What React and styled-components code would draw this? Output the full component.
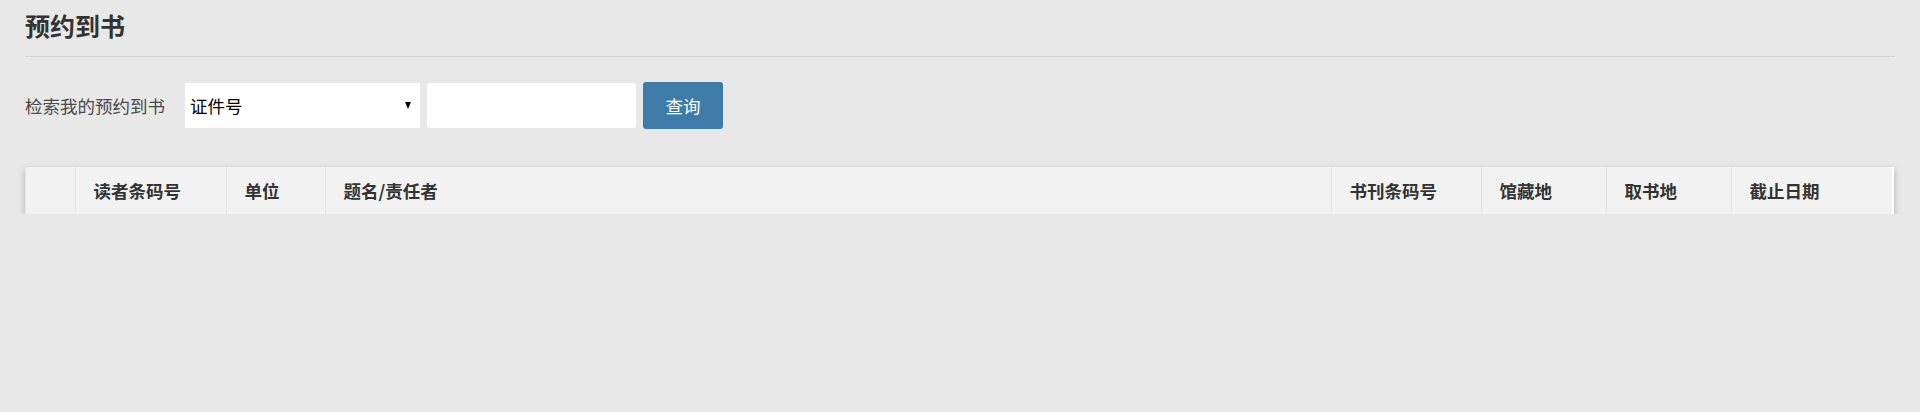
import React from "react";
import styled, { createGlobalStyle } from "styled-components";

const Global = createGlobalStyle`
  html, body { margin: 0; padding: 0; background: #e8e8e8; }
  body { font-family: "Noto Sans CJK SC", "Open Sans", sans-serif; color: #333; }
  * { box-sizing: border-box; }
`;

const Page = styled.div`
  padding: 0 25px;
  width: 1920px;
`;

const Title = styled.h2`
  margin: 0;
  padding: 7px 0 13px;
  line-height: 36px;
  font-size: 25px;
  font-weight: 700;
  color: #333;
  border-bottom: 1px solid #d3d3d3;
`;

const SearchRow = styled.div`
  display: flex;
  align-items: center;
  gap: 7px;
  margin-top: 25px;
  height: 47px;
`;

const Label = styled.span`
  width: 153px;
  font-size: 17.5px;
  color: #4a4a4a;
  line-height: 24px;
`;

const SelectWrap = styled.div`
  position: relative;
  width: 235px;
  height: 45px;
  background: #fff;
`;

const Select = styled.select`
  appearance: none;
  width: 100%;
  height: 100%;
  border: none;
  outline: none;
  background: transparent;
  padding: 0 24px 0 5px;
  font-family: inherit;
  font-size: 17.5px;
  color: #000;
`;

const Arrow = styled.span`
  position: absolute;
  right: 9px;
  top: 19px;
  width: 0;
  height: 0;
  border-left: 3.5px solid transparent;
  border-right: 3.5px solid transparent;
  border-top: 7px solid #000;
  pointer-events: none;
`;

const Input = styled.input`
  width: 209px;
  height: 45px;
  border: none;
  border-radius: 3px;
  background: #fff;
  outline: none;
  padding: 0 8px;
  font-family: inherit;
  font-size: 17.5px;
`;

const Button = styled.button`
  width: 80px;
  height: 47px;
  border: none;
  border-radius: 3px;
  background: #3e7ba8;
  color: #fff;
  font-family: inherit;
  font-size: 17.5px;
  cursor: pointer;
`;

const TableCard = styled.div`
  margin-top: 38px;
  width: 1869px;
  background: #f2f2f2;
  box-shadow: 0 3px 7px rgba(0, 0, 0, 0.26);
  border-left: 1px solid #e6e6e6;
  border-right: 2px solid #fff;
`;

const Table = styled.table`
  width: 100%;
  border-collapse: collapse;
  table-layout: fixed;
`;

const Th = styled.th`
  height: 47px;
  padding: 0 0 0 18px;
  text-align: left;
  font-size: 17.5px;
  font-weight: 700;
  color: #333;
  border-left: 1px solid #e2e2e2;
  white-space: nowrap;
  &:first-child { border-left: none; }
`;

const columns = [
  { label: "", width: 49 },
  { label: "读者条码号", width: 151 },
  { label: "单位", width: 99 },
  { label: "题名/责任者", width: 1006 },
  { label: "书刊条码号", width: 150 },
  { label: "馆藏地", width: 125 },
  { label: "取书地", width: 125 },
  { label: "截止日期", width: 161 },
];

export default function App() {
  return (
    <Page>
      <Global />
      <Title>预约到书</Title>
      <SearchRow>
        <Label>检索我的预约到书</Label>
        <SelectWrap>
          <Select defaultValue="cert">
            <option value="cert">证件号</option>
          </Select>
          <Arrow />
        </SelectWrap>
        <Input type="text" />
        <Button>查询</Button>
      </SearchRow>
      <TableCard>
        <Table>
          <colgroup>
            {columns.map((c, i) => (
              <col key={i} style={{ width: c.width }} />
            ))}
          </colgroup>
          <thead>
            <tr>
              {columns.map((c, i) => (
                <Th key={i}>{c.label}</Th>
              ))}
            </tr>
          </thead>
        </Table>
      </TableCard>
    </Page>
  );
}
